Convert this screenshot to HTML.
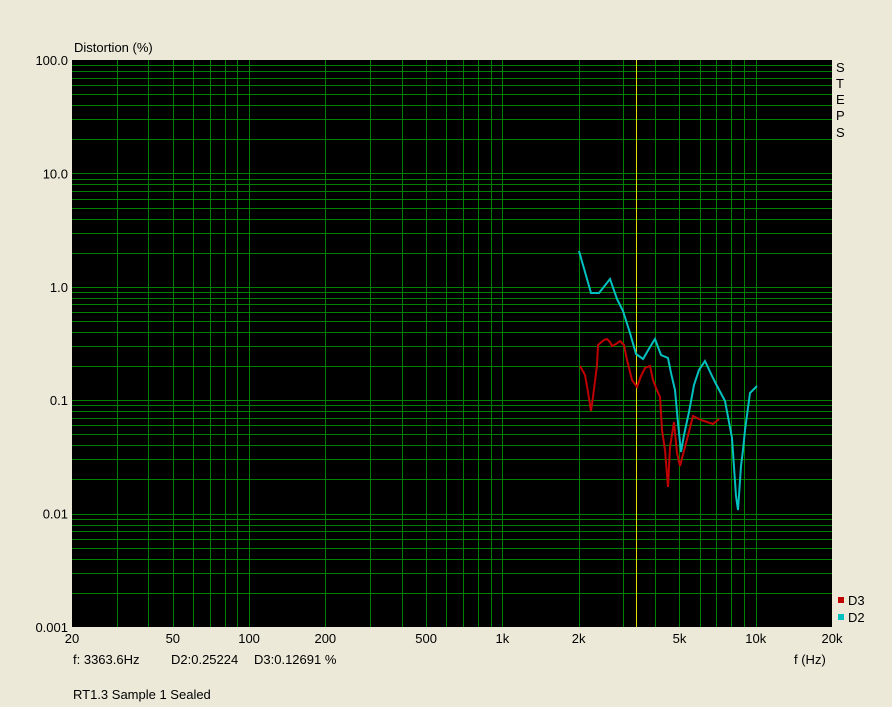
<!DOCTYPE html>
<html><head><meta charset="utf-8">
<style>
html,body{margin:0;padding:0;background:#ece9d8;}
body{width:892px;height:707px;overflow:hidden;position:relative;font-family:"Liberation Sans",sans-serif;}
svg{position:absolute;left:0;top:0;}
text{font-family:"Liberation Sans",sans-serif;font-size:13px;fill:#000;}
</style></head><body>
<svg id="s" width="892" height="707" xmlns="http://www.w3.org/2000/svg">
<rect x="72" y="60" width="760" height="567" fill="#000"/>
<g id="grid" fill="#008000" shape-rendering="crispEdges"></g>
<rect x="636" y="60" width="1" height="567" fill="#e0e000"/>
<polyline fill="none" stroke="#00c0c0" stroke-width="2" points="579,251 591,293 599,293 610,279 617,299 623,311 630,333 636,354 643,359 650,347 655,339 661,355 668,358 671,373 675,390 678,423 681,452 684,435 689,412 694,385 699,370 705,361 712,376 716,384 725,401 732,438 736,496 738,510 741,466 743,450 745,430 750,393 757,386"/>
<polyline fill="none" stroke="#c00000" stroke-width="2" points="580,366 585,375 588,392 591,411 593,397 597,365 598,345 604,340 607,339 610,342 612,346 616,344 620,341 624,345 627,360 632,380 637,387 641,376 645,368 650,366 653,380 656,388 660,397 662,430 665,450 668,487 670,447 674,422 677,453 680,466 685,447 693,416 701,420 707,422 713,424 719,419"/>
<g id="lab"></g>
<text x="74" y="52">Distortion (%)</text>
<text x="836" y="72">S</text><text x="836" y="88">T</text><text x="836" y="104">E</text><text x="836" y="120">P</text><text x="836" y="137">S</text>
<rect x="838" y="597" width="6" height="6" fill="#c00000"/><text x="848" y="605">D3</text>
<rect x="838" y="614" width="6" height="6" fill="#00c0c0"/><text x="848" y="622">D2</text>
<text x="794" y="664">f (Hz)</text>
<text x="73" y="664">f: 3363.6Hz</text>
<text x="171" y="664">D2:0.25224</text>
<text x="254" y="664">D3:0.12691 %</text>
<text x="73" y="699">RT1.3 Sample 1 Sealed</text>
</svg>
<script>
var g=document.getElementById('grid'),L=document.getElementById('lab'),ns='http://www.w3.org/2000/svg';
function rc(x,y,w,h){var r=document.createElementNS(ns,'rect');r.setAttribute('x',x);r.setAttribute('y',y);r.setAttribute('width',w);r.setAttribute('height',h);g.appendChild(r);}
function tx(s,x,y,a){var t=document.createElementNS(ns,'text');t.setAttribute('x',x);t.setAttribute('y',y);t.setAttribute('text-anchor',a);t.textContent=s;L.appendChild(t);}
var X0=72,X1=832,Y0=60,Y1=627;
function fx(f){return X0+(Math.log10(f/20)/3)*(X1-X0);}
function fy(v){return Y0+((2-Math.log10(v))/5)*(Y1-Y0);}
[10,100,1000,10000].forEach(function(d){for(var k=1;k<10;k++){var f=d*k;if(f<=20||f>=20000)continue;rc(Math.round(fx(f)),Y0,1,Y1-Y0);}});
[0.001,0.01,0.1,1,10].forEach(function(d){for(var k=1;k<10;k++){var v=d*k;if(v<=0.001||v>=100)continue;rc(X0,Math.round(fy(v)),X1-X0,1);}});
[['100.0',100],['10.0',10],['1.0',1],['0.1',0.1],['0.01',0.01],['0.001',0.001]].forEach(function(a){tx(a[0],68,fy(a[1])+5,'end');});
[['20',20],['50',50],['100',100],['200',200],['500',500],['1k',1000],['2k',2000],['5k',5000],['10k',10000],['20k',20000]].forEach(function(a){tx(a[0],fx(a[1]),643,'middle');});
</script>
</body></html>
